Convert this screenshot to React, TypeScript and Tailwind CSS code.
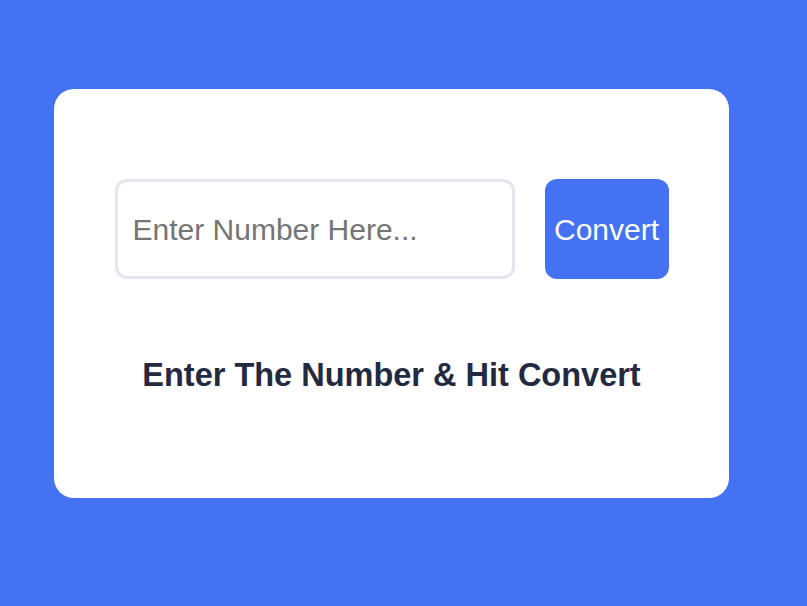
import React, { useState } from 'react'

const App: React.FC = (): React.ReactElement => {
    const [value, setValue] = useState('')

    return (
        <div className="min-h-[606px] w-full bg-[#4472f2] pt-[89px] pl-[54px] font-['Liberation_Sans',Arial,sans-serif]">
            <div className="w-[675px] h-[409px] bg-white rounded-[20px] pt-[90px] flex flex-col items-center">
                <div className="flex items-center gap-[30px]">
                    <input
                        type="text"
                        value={value}
                        onChange={(e) => setValue(e.target.value)}
                        placeholder="Enter Number Here..."
                        className="w-[400px] h-[100px] border-[3px] border-[#e5e5f0] rounded-[12px] px-[15px] pt-[2px] text-[30px] text-[#222] placeholder:text-[#757575] outline-none"
                    />
                    <button className="w-[124px] h-[100px] rounded-[12px] bg-[#4472f2] text-white text-[30px]">
                        Convert
                    </button>
                </div>
                <h2 className="mt-[72px] text-[32.5px] font-bold text-[#232a40]">
                    Enter The Number &amp; Hit Convert
                </h2>
            </div>
        </div>
    )
}

export default App
